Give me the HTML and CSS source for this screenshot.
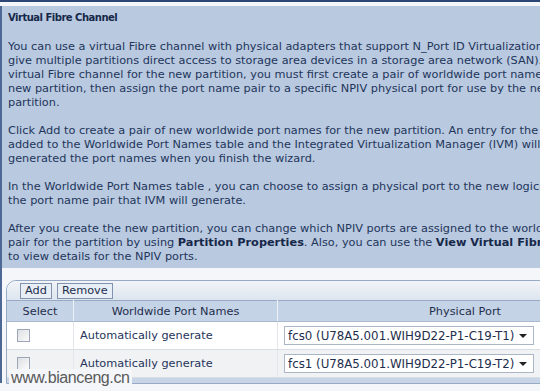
FILE: index.html
```html
<!DOCTYPE html>
<html lang="en">
<head>
  <meta charset="UTF-8">
  <title>Virtual Fibre Channel</title>
  <link rel="stylesheet" href="styles.css">
</head>
<body>
<div class="frame">
  <div class="info">
    <h3>Virtual Fibre Channel</h3>
    <p>You can use a virtual Fibre channel with physical adapters that support N_Port ID Virtualization (NPIV) to<br>
    give multiple partitions direct access to storage area devices in a storage area network (SAN). To use a<br>
    virtual Fibre channel for the new partition, you must first create a pair of worldwide port names for the<br>
    new partition, then assign the port name pair to a specific NPIV physical port for use by the new<br>
    partition.</p>
    <p>Click Add to create a pair of new worldwide port names for the new partition. An entry for the pair is<br>
    added to the Worldwide Port Names table and the Integrated Virtualization Manager (IVM) will<br>
    generated the port names when you finish the wizard.</p>
    <p>In the Worldwide Port Names table , you can choose to assign a physical port to the new logical partition for<br>
    the port name pair that IVM will generate.</p>
    <p>After you create the new partition, you can change which NPIV ports are assigned to the worldwide port name<br>
    pair for the partition by using <b>Partition Properties</b>. Also, you can use the <b>View Virtual Fibre Channel</b> task<br>
    to view details for the NPIV ports.</p>
  </div>

  <div class="ports">
    <div class="toolbar">
      <button>Add</button>
      <button>Remove</button>
    </div>
    <table class="grid">
      <thead>
        <tr>
          <th class="col-select">Select</th>
          <th class="col-names">Worldwide Port Names</th>
          <th class="col-port">Physical Port</th>
        </tr>
      </thead>
      <tbody>
        <tr>
          <td class="center"><span class="check"></span></td>
          <td>Automatically generate</td>
          <td><div class="dropdown">fcs0 (U78A5.001.WIH9D22-P1-C19-T1)<span class="arrow"></span></div></td>
        </tr>
        <tr class="alt">
          <td class="center"><span class="check"></span></td>
          <td>Automatically generate</td>
          <td><div class="dropdown">fcs1 (U78A5.001.WIH9D22-P1-C19-T2)<span class="arrow"></span></div></td>
        </tr>
      </tbody>
    </table>
    <div class="footer"></div>
  </div>
</div>
<div class="watermark">www.bianceng.cn</div>
</body>
</html>
```

FILE: styles.css
```css
html, body { overflow: hidden; }
body { margin: 0; background: #f4f6f9; border-top: 2px solid #2c4676; font-family: "DejaVu Sans", Verdana, sans-serif; font-size: 11.3px; color: #22355a; position: relative; height: 389px; }
.frame { margin-top: 4px; border-left: 2px solid #4d6895; width: 652px; height: 377px; }
.info { background: #b9c9e0; padding: 5px 8px 4px 6px; white-space: nowrap; }
.info h3 { margin: 0 0 15px; font-size: 10px; letter-spacing: -0.5px; line-height: 14px; color: #162849; }
.info p { margin: 0 0 14px; line-height: 14px; }
.info p:last-child { margin-bottom: 0; }
.info b { color: #162849; }

.ports { margin: 12px 0 0 4px; border: 1px solid #98a9c4; border-top-left-radius: 10px; background: #fff; }
.toolbar { display: flex; gap: 5px; padding: 2px 0 1px 13px; background: linear-gradient(#f1f4f8, #dde5ef); border-top-left-radius: 10px; }
.toolbar button { font: inherit; font-size: 11.3px; color: #1e2e4c; height: 16px; line-height: 14px; padding: 0 4px; background: #e8eef6; border: 1px solid #8193ad; }

.grid { border-collapse: collapse; width: 100%; font-size: 11.3px; }
.grid th { background: #c5d3e6; font-weight: normal; height: 20px; padding: 0; border-top: 1px solid #98a9c4; border-bottom: 1px solid #a9b8cc; border-right: 1px solid #eef2f7; color: #1e2e4c; }
.grid td { height: 27px; padding: 0 0 0 6px; border-bottom: 1px solid #d9dee5; border-right: 1px solid #e3e7ec; color: #24345a; }
.col-select { width: 66px; }
.col-names { width: 203px; }
.grid td.center { padding: 0 0 0 10px; }
.alt td { background: #f1f2f4; }
.check { display: inline-block; width: 11px; height: 11px; border: 1px solid #9ba6b6; background: linear-gradient(135deg, #dcdfe3, #fbfbfb); vertical-align: middle; }
.dropdown { display: inline-flex; align-items: center; width: 250px; height: 19px; padding-left: 3px; border: 1px solid #aab6c6; background: #fff; color: #1e2e4c; font-size: 11.8px; box-sizing: border-box; }
.arrow { margin-left: auto; margin-right: 6px; width: 0; height: 0; border-left: 4px solid transparent; border-right: 4px solid transparent; border-top: 4px solid #222; }
.footer { height: 5px; background: #c8d5e6; }

.watermark { position: absolute; left: 9px; top: 367px; padding: 0 2px; background: #f4f6f9; font-family: "Liberation Sans", Arial, sans-serif; font-size: 16px; color: #5a5a5a; letter-spacing: -0.4px; line-height: 18px; }
```
